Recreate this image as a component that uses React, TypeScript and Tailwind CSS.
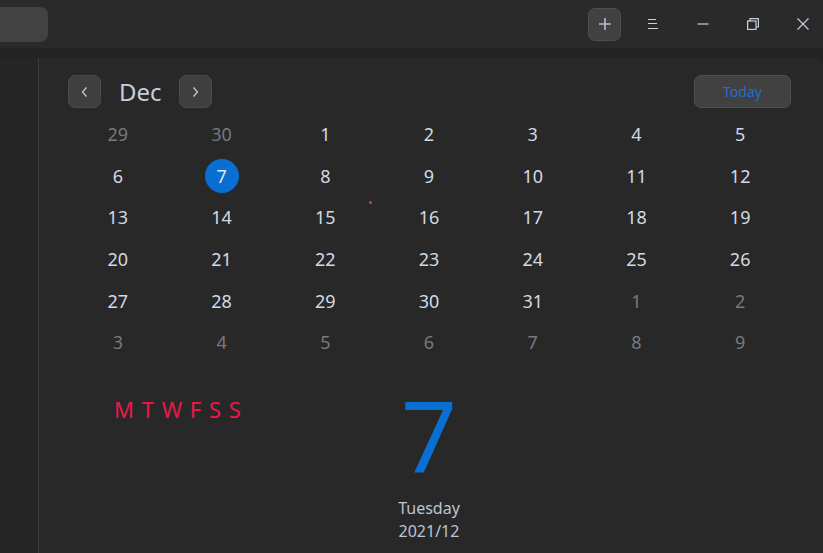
import React from "react";

const weeks: { d: number; muted?: boolean }[][] = [
  [{ d: 29, muted: true }, { d: 30, muted: true }, { d: 1 }, { d: 2 }, { d: 3 }, { d: 4 }, { d: 5 }],
  [{ d: 6 }, { d: 7 }, { d: 8 }, { d: 9 }, { d: 10 }, { d: 11 }, { d: 12 }],
  [{ d: 13 }, { d: 14 }, { d: 15 }, { d: 16 }, { d: 17 }, { d: 18 }, { d: 19 }],
  [{ d: 20 }, { d: 21 }, { d: 22 }, { d: 23 }, { d: 24 }, { d: 25 }, { d: 26 }],
  [{ d: 27 }, { d: 28 }, { d: 29 }, { d: 30 }, { d: 31 }, { d: 1, muted: true }, { d: 2, muted: true }],
  [{ d: 3, muted: true }, { d: 4, muted: true }, { d: 5, muted: true }, { d: 6, muted: true }, { d: 7, muted: true }, { d: 8, muted: true }, { d: 9, muted: true }],
];

function TitleBar() {
  return (
    <header className="flex h-12 items-center bg-[#2a2a2a]">
      <div className="h-[35px] w-12 rounded-r-[8px] bg-[#424242]" />
      <div className="flex-1" />
      <button className="flex h-[33px] w-[33px] items-center justify-center rounded-[7px] border border-[#4e4e4e] bg-[#414141]">
        <svg width="14" height="14" viewBox="0 0 14 14" stroke="#b4bccb" strokeWidth="1.6">
          <path d="M7 1v12M1 7h12" />
        </svg>
      </button>
      <div className="ml-[12px] flex gap-[10px]">
        <div className="flex h-12 w-10 items-center justify-center">
          <svg width="12" height="12" viewBox="0 0 12 12" stroke="#c8d0de" strokeWidth="1.2">
            <path d="M1 1.5h8M1 5.5h9M1 10.5h10" />
          </svg>
        </div>
        <div className="flex h-12 w-10 items-center justify-center">
          <svg width="12" height="12" viewBox="0 0 12 12" stroke="#c8d0de" strokeWidth="1.2">
            <path d="M0.5 6h11" />
          </svg>
        </div>
        <div className="flex h-12 w-10 items-center justify-center">
          <svg width="12" height="12" viewBox="0 0 12 12" fill="none" stroke="#c8d0de" strokeWidth="1.2">
            <rect x="0.6" y="3" width="8.4" height="8.4" />
            <path d="M3 3V0.6h8.4V9H9" />
          </svg>
        </div>
        <div className="flex h-12 w-10 items-center justify-center">
          <svg width="12" height="12" viewBox="0 0 12 12" stroke="#c8d0de" strokeWidth="1.1">
            <path d="M0.5 0.5l11 11M11.5 0.5l-11 11" />
          </svg>
        </div>
      </div>
    </header>
  );
}

function NavButton({ dir }: { dir: "prev" | "next" }) {
  return (
    <button className="flex h-[33px] w-[33px] items-center justify-center rounded-[7px] border border-[#4a4a4a] bg-[#3f3f3f]">
      <svg width="8" height="12" viewBox="0 0 8 12" fill="none" stroke="#c8d0de" strokeWidth="1.2">
        {dir === "prev" ? <path d="M5.5 1.5L1.5 6l4 4.5" /> : <path d="M2.5 1.5L6.5 6l-4 4.5" />}
      </svg>
    </button>
  );
}

export default function App() {
  return (
    <div
      className="flex h-[553px] w-[823px] flex-col overflow-hidden bg-[#232323]"
      style={{ fontFamily: '"Noto Sans", "Open Sans", sans-serif' }}
    >
      <TitleBar />
      <div className="mt-[10px] flex flex-1">
        <aside className="w-[39px] border-r border-[#3a3a3a] bg-[#262626]" />
        <main className="relative flex-1 rounded-tr-[8px] bg-[#282828] pl-[27px] pr-[31px] pt-[17px]">
          <div className="ml-[2px] mr-[1px] flex h-[33px] items-center">
            <NavButton dir="prev" />
            <span className="ml-[18px] mr-[17px] text-[24px] leading-none text-[#c6cedd]">Dec</span>
            <NavButton dir="next" />
            <div className="flex-1" />
            <button className="h-[33px] w-[97px] rounded-[7px] border border-[#4e4e4e] bg-[#414141] text-[14px] text-[#1f6fc9]">
              Today
            </button>
          </div>

          <div className="mt-[6px] grid grid-cols-7">
            {weeks.map((week, wi) =>
              week.map((day, di) => {
                const selected = wi === 1 && di === 1;
                return (
                  <div key={`${wi}-${di}`} className="flex h-[41.6px] items-center justify-center">
                    {selected ? (
                      <span className="flex h-[34px] w-[34px] items-center justify-center rounded-full bg-[#0a6fd2] text-[18px] text-[#dfe6f2]">
                        {day.d}
                      </span>
                    ) : (
                      <span className={`text-[18px] ${day.muted ? "text-[#777a7e]" : "text-[#d3d9e4]"}`}>
                        {day.d}
                      </span>
                    )}
                  </div>
                );
              })
            )}
          </div>

          <span className="absolute left-[330px] top-[143px] h-[3px] w-[3px] rounded-full bg-[#d9480f]" />

          <div className="mt-[9px] grid grid-cols-7">
            <div className="col-span-3 pl-[48px] pt-[25px]">
              <span className="text-[22px] leading-none tracking-[1px] text-[#e8194a]">M T W F S S</span>
            </div>
            <div className="flex flex-col items-center">
              <span className="text-[98px] leading-[124px] text-[#0a6fd2]">7</span>
              <span className="text-[16px] leading-[23px] text-[#bcc5d4]">Tuesday</span>
              <span className="text-[16px] leading-[23px] text-[#bcc5d4]">2021/12</span>
            </div>
          </div>
        </main>
      </div>
    </div>
  );
}
